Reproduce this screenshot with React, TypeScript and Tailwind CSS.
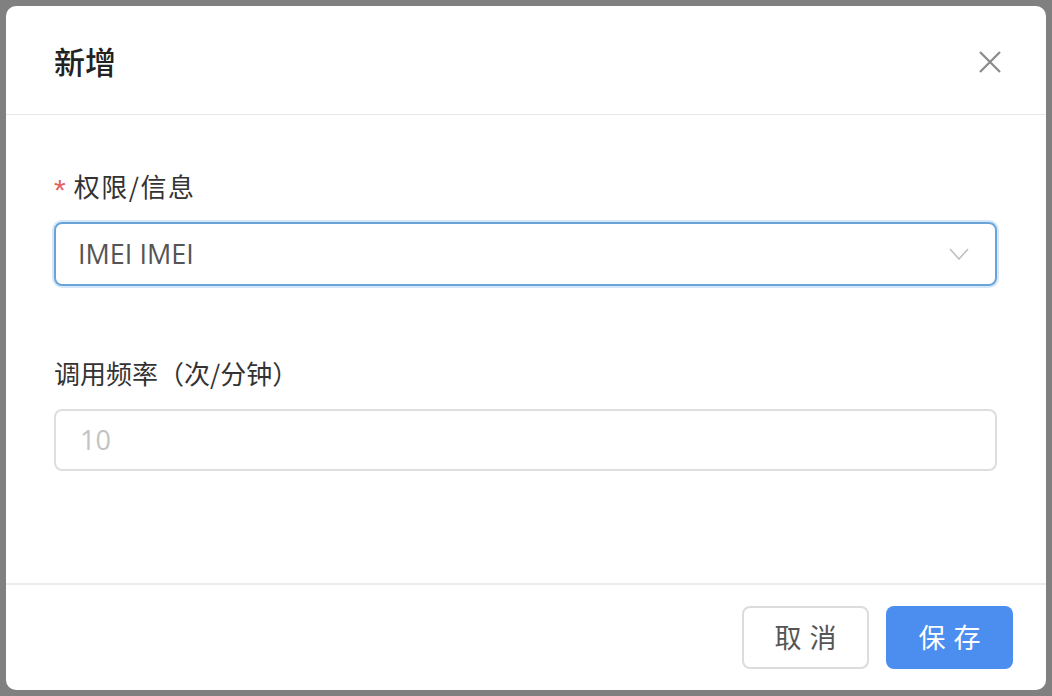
import React from "react";

export default function App() {
  const font = { fontFamily: '"Noto Sans CJK SC", "Noto Sans", sans-serif' };
  return (
    <div className="w-[1052px] h-[696px] bg-[#808080] p-[6px] overflow-hidden" style={font}>
      <div className="w-[1040px] h-[684px] bg-white rounded-[10px] flex flex-col">
        <div className="h-[109px] flex items-center justify-between pl-[48px] pr-[44px] border-b border-[#e6e6e6]">
          <span className="text-[31px] font-medium text-[#222] leading-none">新增</span>
          <svg width="24" height="24" viewBox="0 0 24 24" className="text-[#8a8a8a] mt-[4px]">
            <path d="M2 2 L22 22 M22 2 L2 22" stroke="currentColor" strokeWidth="2.2" fill="none" />
          </svg>
        </div>
        <div className="flex-1 px-[48px] pt-[56px]">
          <div className="flex items-center h-[30px] text-[26px] text-[#333] leading-none">
            <span className="text-[#e26060] text-[30px] mr-[8px] mt-[8px]" style={{ fontFamily: '"Liberation Sans", sans-serif' }}>*</span>
            <span className="tracking-[1.5px]">权限/信息</span>
          </div>
          <div className="mt-[21px] h-[64px] w-[943px] rounded-[8px] border-2 border-[#6aa3d8] ring-2 ring-[#d5e8f9] flex items-center justify-between pl-[22px] pr-[26px]">
            <span className="text-[27px] text-[#555]" style={{ fontFamily: '"Open Sans", "Noto Sans", sans-serif' }}>IMEI IMEI</span>
            <svg width="20" height="12" viewBox="0 0 20 12">
              <path d="M1 1 L10 11 L19 1" stroke="#bdbdbd" strokeWidth="1.5" fill="none" />
            </svg>
          </div>
          <div className="mt-[72px] h-[30px] flex items-center text-[26px] text-[#333] leading-none">
            调用频率（次/分钟）
          </div>
          <div className="mt-[21px] h-[62px] w-[943px] rounded-[8px] border-2 border-[#dedede] flex items-center pl-[24px]">
            <span className="text-[27px] text-[#c3c3c3]" style={{ fontFamily: '"Open Sans", "Noto Sans", sans-serif' }}>10</span>
          </div>
        </div>
        <div className="h-[107px] border-t-2 border-[#ececec] flex items-center justify-end gap-[17px] pr-[33px]">
          <div className="w-[127px] h-[63px] rounded-[8px] border-2 border-[#dcdcdc] flex items-center justify-center text-[27px] text-[#555] tracking-[8px] pl-[8px]">
            取消
          </div>
          <div className="w-[127px] h-[63px] rounded-[8px] bg-[#4b8ef0] flex items-center justify-center text-[27px] text-white tracking-[8px] pl-[8px]">
            保存
          </div>
        </div>
      </div>
    </div>
  );
}
